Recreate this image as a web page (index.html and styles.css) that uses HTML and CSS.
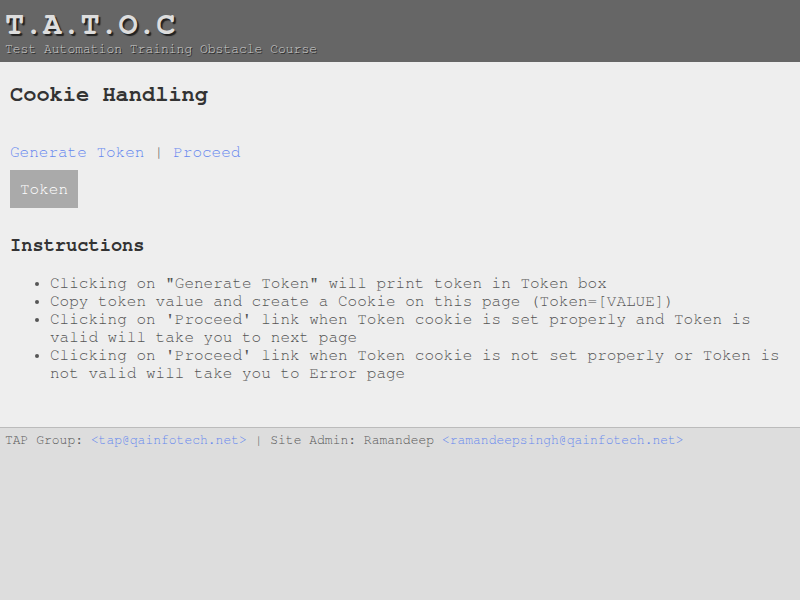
FILE: index.html
```html
<!DOCTYPE html>
<html>
<head>
<meta charset="utf-8">
<title>Cookie Handling - Basic Course - T.A.T.O.C</title>
<link rel="stylesheet" href="styles.css">
</head>
<body>
<div class="page">
  <header class="header">
    <div class="title">T.A.T.O.C</div>
    <div class="subtitle">Test Automation Training Obstacle Course</div>
  </header>
  <main class="content">
    <h2 class="page-title">Cookie Handling</h2>
    <div class="links"><a href="#">Generate Token</a> | <a href="#">Proceed</a></div>
    <div class="token-row"><span class="token">Token</span></div>
    <h3 class="section-title">Instructions</h3>
    <ul class="instructions">
      <li>Clicking on "Generate Token" will print token in Token box</li>
      <li>Copy token value and create a Cookie on this page (Token=[VALUE])</li>
      <li>Clicking on 'Proceed' link when Token cookie is set properly and Token is valid will take you to next page</li>
      <li>Clicking on 'Proceed' link when Token cookie is not set properly or Token is not valid will take you to Error page</li>
    </ul>
  </main>
  <footer class="footer">TAP Group: <a href="#">&lt;tap@qainfotech.net&gt;</a> | Site Admin: Ramandeep <a href="#">&lt;ramandeepsingh@qainfotech.net&gt;</a></footer>
</div>
</body>
</html>
```

FILE: styles.css
```css
html, body {
  margin: 0;
  padding: 0;
  height: 100%;
}
body {
  font-family: "Nimbus Mono PS", "Nimbus Mono L", "FreeMono", "Courier", "Liberation Mono", monospace;
  background: #dddddd;
  color: #555555;
}
.page {
  display: flex;
  flex-direction: column;
  min-height: 100%;
}
.header {
  background: #666666;
  height: 62px;
  box-sizing: border-box;
  padding: 10px 5px 0 5px;
}
.title {
  font-size: 32px;
  font-weight: bold;
  letter-spacing: -0.3px;
  line-height: 28px;
  color: #dddddd;
  text-shadow: 2px 2px 1px #222222;
}
.subtitle {
  font-size: 13px;
  line-height: 15px;
  margin-top: 4px;
  color: #cccccc;
  text-shadow: 1px 1px 0 #222222;
}
.content {
  background: #eeeeee;
  padding: 20px 10px 45px 10px;
}
.page-title {
  font-size: 22px;
  line-height: 25px;
  font-weight: bold;
  color: #333333;
  margin: 0 0 36px 0;
}
.links {
  font-size: 16px;
  line-height: 18px;
}
a {
  color: #6688ee;
  text-decoration: none;
}
.token-row {
  display: flex;
  margin-top: 9px;
}
.token {
  background: #aaaaaa;
  color: #ffffff;
  font-size: 16px;
  line-height: 18px;
  padding: 10px;
}
.section-title {
  font-size: 18.7px;
  line-height: 21px;
  font-weight: bold;
  color: #333333;
  margin: 27px 0 18px 0;
}
.instructions {
  margin: 0;
  padding-left: 40px;
  font-size: 16px;
  line-height: 18px;
}
.footer {
  flex: 1;
  border-top: 1px solid #bbbbbb;
  padding: 5px;
  font-size: 13px;
  line-height: 15px;
  color: #555555;
}
```
